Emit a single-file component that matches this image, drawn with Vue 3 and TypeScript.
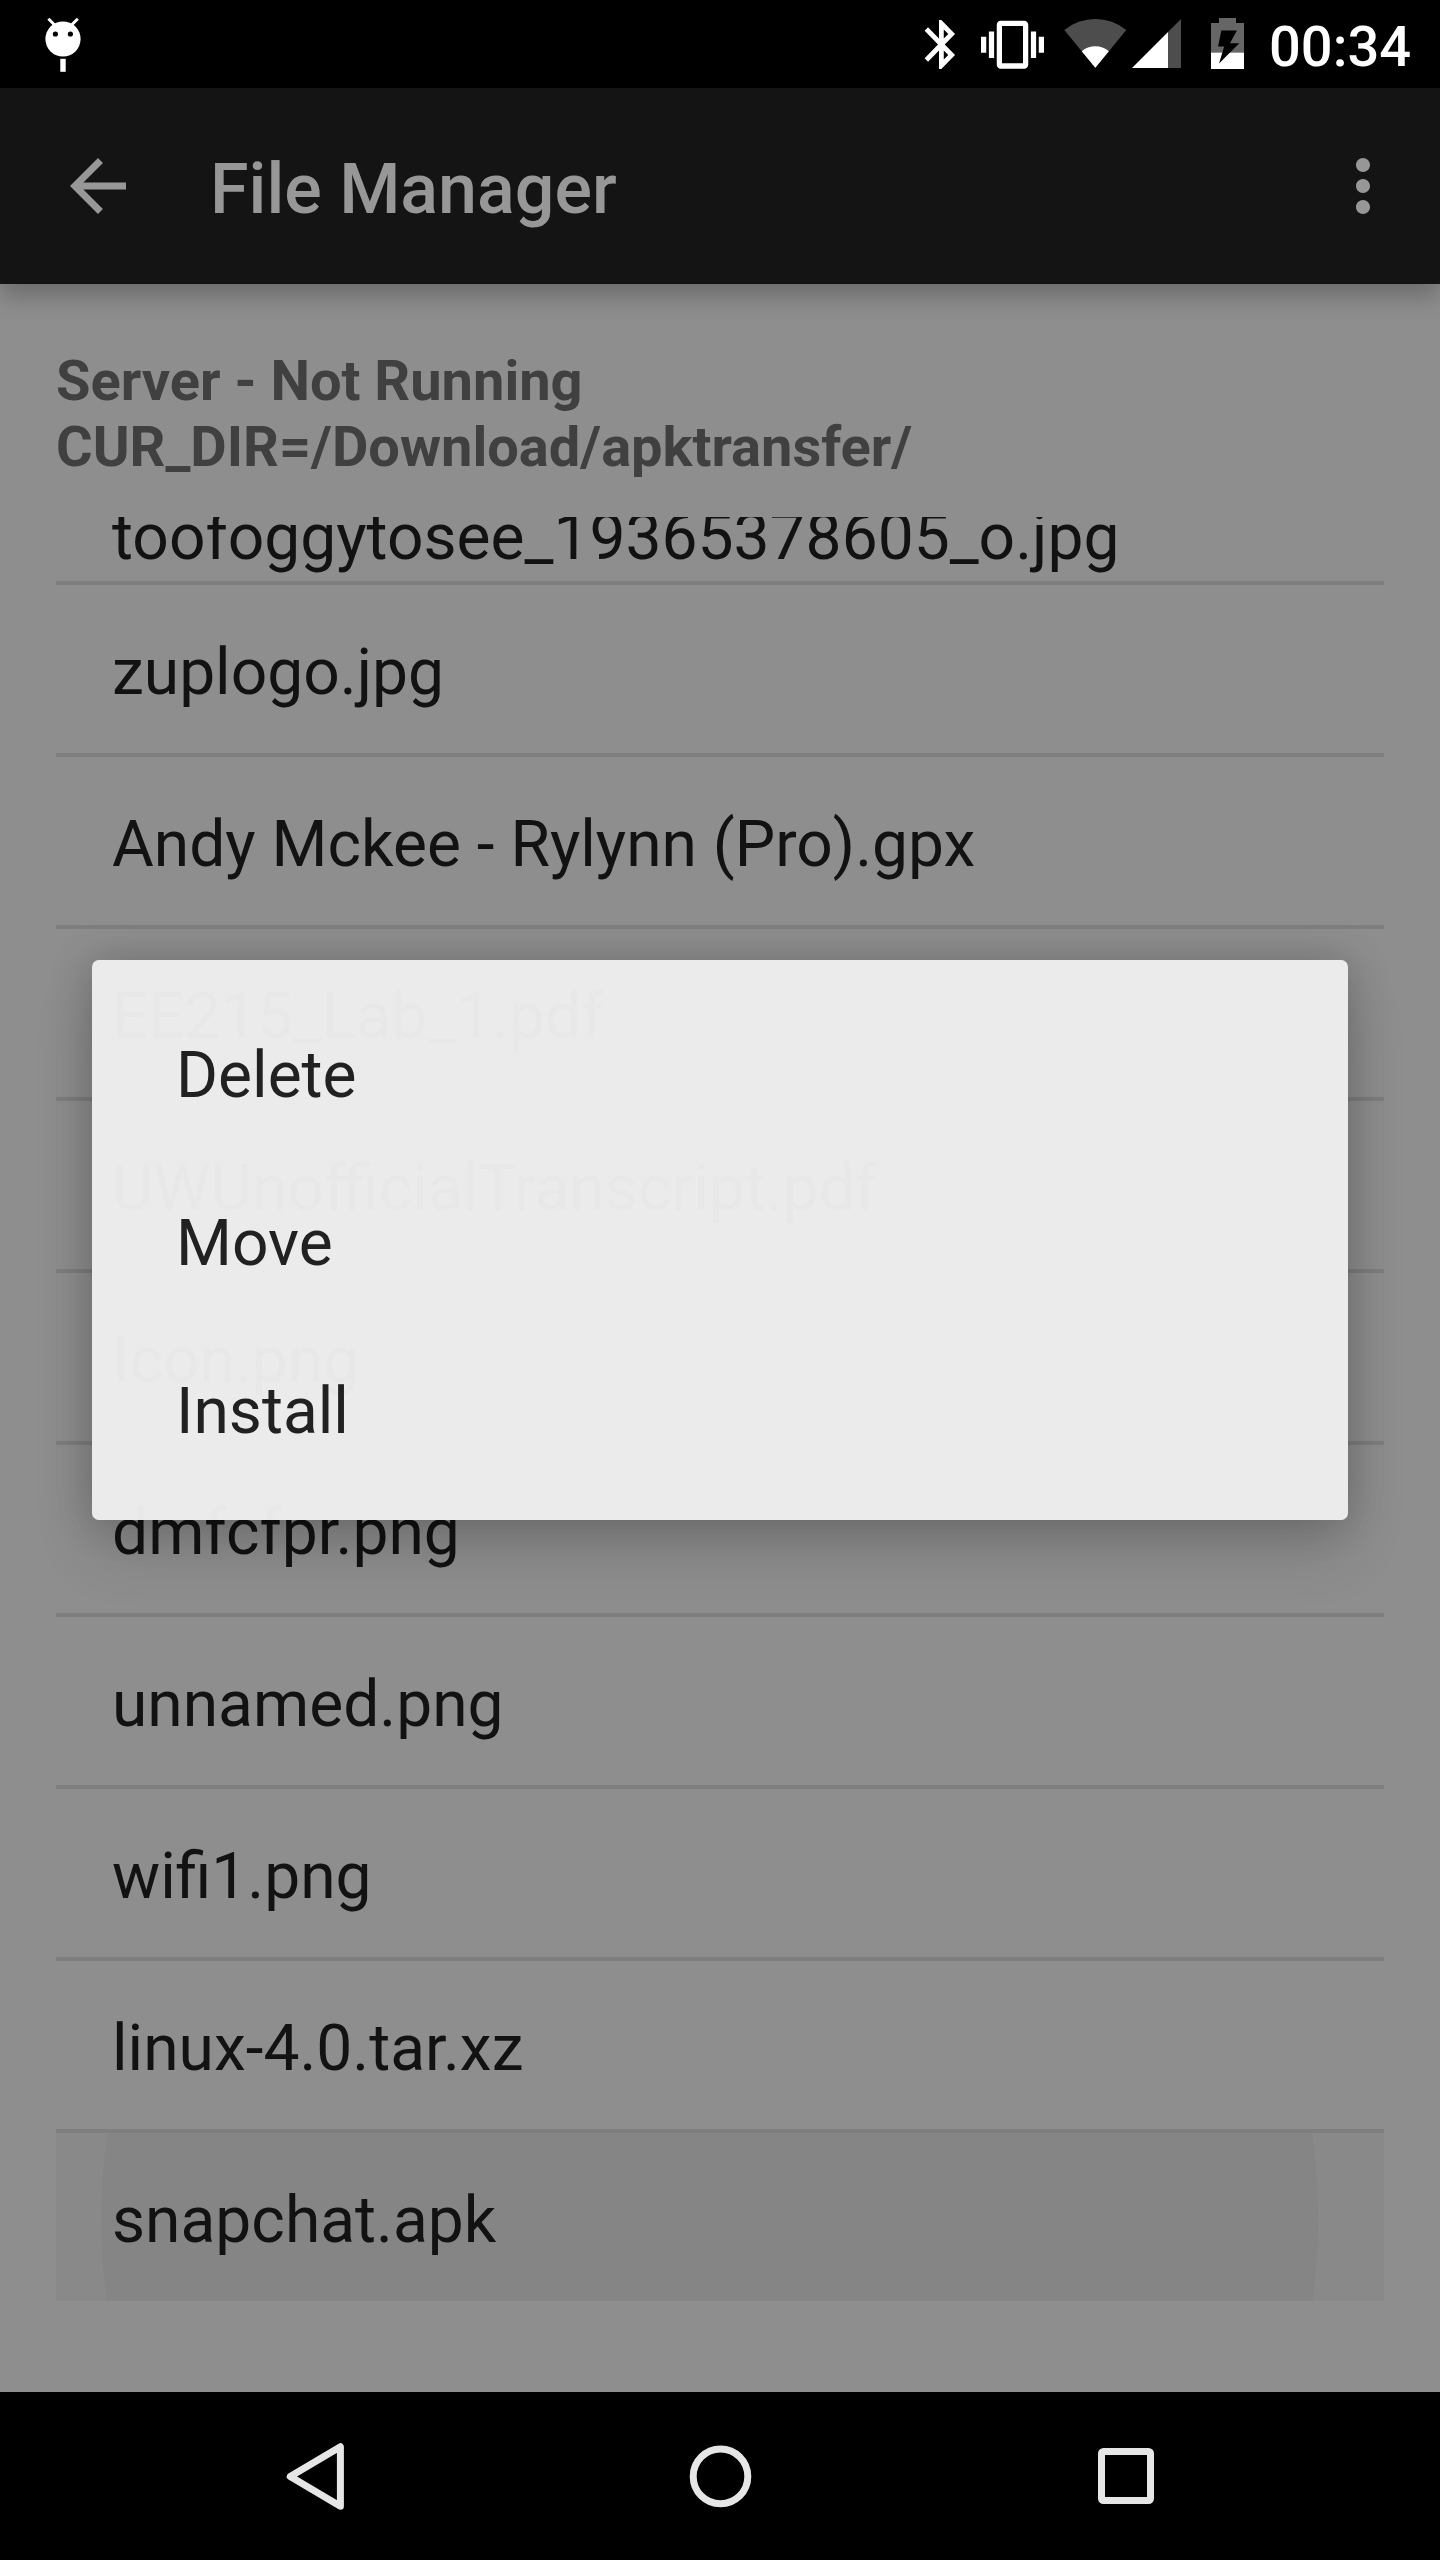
<script setup lang="ts">
interface FileRow {
  name: string
  pressed?: boolean
}

const files: FileRow[] = [
  { name: 'toofoggytosee_19365378605_o.jpg' },
  { name: 'zuplogo.jpg' },
  { name: 'Andy Mckee - Rylynn (Pro).gpx' },
  { name: 'EE215_Lab_1.pdf' },
  { name: 'UWUnofficialTranscript.pdf' },
  { name: 'Icon.png' },
  { name: 'dmfcfpr.png' },
  { name: 'unnamed.png' },
  { name: 'wifi1.png' },
  { name: 'linux-4.0.tar.xz' },
  { name: 'snapchat.apk', pressed: true },
]

const actions: string[] = ['Delete', 'Move', 'Install']
</script>

<template>
  <div class="screen">
    <header class="status-bar">
      <svg class="debug-icon" width="60" height="88" viewBox="33 0 60 88">
        <circle cx="63" cy="39" r="17.6" fill="#fff" />
        <path d="M48.4 18.8l6 6M77.8 18.8l-6 6" stroke="#fff" stroke-width="3" />
        <circle cx="55.4" cy="34" r="2.6" fill="#000" />
        <circle cx="70.4" cy="34" r="2.6" fill="#000" />
        <rect x="60.3" y="58.8" width="5.4" height="13" fill="#fff" />
      </svg>
      <div class="indicators">
        <svg width="58" height="88" viewBox="912 0 58 88">
          <path
            transform="translate(912.7 15.1) scale(2.39 2.45)"
            fill="#fff"
            d="M17.71 7.71L12 2h-1v7.59L6.41 5 5 6.41 10.59 12 5 17.59 6.41 19 11 14.41V22h1l5.71-5.71-4.3-4.29 4.3-4.29zM13 5.83l1.88 1.88L13 9.59V5.83zm1.88 10.46L13 18.17v-3.76l1.88 1.88z"
          />
        </svg>
        <svg width="84" height="88" viewBox="970 0 84 88">
          <path
            transform="translate(981 12.8) scale(2.625 2.66)"
            fill="#fff"
            d="M0 15h2V9H0v6zm3 2h2V7H3v10zm19-8v6h2V9h-2zm-3 8h2V7h-2v10zM16.5 3h-9C6.67 3 6 3.67 6 4.5v15c0 .83.67 1.5 1.5 1.5h9c.83 0 1.5-.67 1.5-1.5v-15c0-.83-.67-1.5-1.5-1.5zM16 19H8V5h8v14z"
          />
        </svg>
        <svg width="76" height="88" viewBox="1054 0 76 88">
          <path d="M1095.3 67.8L1064.3 30A48.8 48.8 0 0 1 1126.3 30Z" fill="#4d4d4d" />
          <path d="M1095.3 67.8L1081.7 51.2A21.5 21.5 0 0 1 1108.9 51.2Z" fill="#fff" />
        </svg>
        <svg width="62" height="88" viewBox="1130 0 62 88">
          <path d="M1168 32v36h13V19z" fill="#4d4d4d" />
          <path d="M1132 68l36-36v36z" fill="#fff" />
        </svg>
        <svg width="68" height="88" viewBox="1192 0 68 88">
          <path d="M1219 18h17v5h8v29.5h-33V23h8z" fill="#666" />
          <path d="M1211 52.5h33V69h-33z" fill="#fff" />
          <path d="M1221.3 30.6h15.6l-6.9 12.6h9.3L1219 63.5l5.2-17h-6.1z" fill="#000" />
        </svg>
        <span class="clock">00:34</span>
      </div>
    </header>

    <div class="toolbar">
      <svg width="84" height="84" viewBox="0 0 24 24">
        <path
          fill="#979797"
          d="M20 11H7.83l5.59-5.59L12 4l-8 8 8 8 1.41-1.41L7.83 13H20v-2z"
        />
      </svg>
      <h1 class="title">File Manager</h1>
      <svg class="overflow" width="84" height="84" viewBox="0 0 24 24">
        <path
          fill="#979797"
          d="M12 8c1.1 0 2-.9 2-2s-.9-2-2-2-2 .9-2 2 .9 2 2 2zm0 2c-1.1 0-2 .9-2 2s.9 2 2 2 2-.9 2-2-.9-2-2-2zm0 6c-1.1 0-2 .9-2 2s.9 2 2 2 2-.9 2-2-.9-2-2-2z"
        />
      </svg>
    </div>

    <main class="content">
      <div class="info">
        <div>Server - Not Running</div>
        <div>CUR_DIR=/Download/apktransfer/</div>
      </div>
      <ul class="files">
        <li v-for="file in files" :key="file.name" class="file" :class="{ pressed: file.pressed }">
          <span class="label">{{ file.name }}</span>
        </li>
      </ul>
    </main>

    <nav class="nav-bar">
      <svg width="405" height="168" viewBox="112.5 2392 405 168">
        <path d="M289.7 2476.5L339.9 2446.7V2506.3Z" />
      </svg>
      <svg width="405" height="168" viewBox="517.5 2392 405 168">
        <circle cx="720" cy="2476.4" r="27.3" />
      </svg>
      <svg width="405" height="168" viewBox="922.5 2392 405 168">
        <rect x="1101" y="2451.5" width="49" height="49" rx="2" />
      </svg>
    </nav>

    <div class="dialog">
      <div v-for="action in actions" :key="action" class="action">{{ action }}</div>
    </div>
  </div>
</template>

<style>
body {
  margin: 0;
  background: #000;
}
</style>

<style scoped>
.screen {
  position: relative;
  display: flex;
  flex-direction: column;
  width: 1440px;
  height: 2560px;
  overflow: hidden;
  background: #8e8e8e;
  font-family: Roboto, 'Liberation Sans', sans-serif;
}

svg {
  display: block;
  flex: none;
}

.status-bar {
  display: flex;
  justify-content: space-between;
  height: 88px;
  flex: none;
  padding-left: 33px;
  background: #000;
}

.indicators {
  display: flex;
}

.clock {
  box-sizing: border-box;
  width: 180px;
  padding: 3px 0 0 9px;
  color: #fff;
  font-size: 56px;
  font-weight: 500;
  line-height: 88px;
  white-space: nowrap;
}

.toolbar {
  position: relative;
  display: flex;
  align-items: center;
  flex: none;
  box-sizing: border-box;
  height: 196px;
  padding: 0 35px 0 56px;
  background: #141414;
  box-shadow: 0 13px 22px rgba(0, 0, 0, 0.23);
}

.title {
  flex: 1;
  margin: 6px 0 0 70px;
  color: #979797;
  font-size: 70px;
  font-weight: 500;
  line-height: 82px;
}

.content {
  flex: 1;
  padding: 64px 56px 0;
}

.info {
  color: #404040;
  font-size: 56px;
  font-weight: 700;
  line-height: 66px;
  white-space: nowrap;
}

.files {
  display: flex;
  flex-direction: column;
  height: 1784px;
  margin: 37px 0 0;
  padding: 0;
  overflow: hidden;
  list-style: none;
}

.file {
  flex: none;
  box-sizing: border-box;
  height: 172px;
  padding: 7px 0 0 56px;
  border-bottom: 4px solid #7e7e7e;
  color: #121212;
  font-size: 64.1px;
  line-height: 161px;
  white-space: nowrap;
}

/* The list is scrolled, so only the last line of the first row is showing. */
.file:first-child {
  height: 68px;
  padding-top: 0;
  line-height: 42px;
}

.file.pressed {
  height: 168px;
  border-bottom: 0;
  background: radial-gradient(circle at 653.7px 86px, #858585 608px, #898989 609px);
}

.nav-bar {
  display: flex;
  justify-content: center;
  flex: none;
  height: 168px;
  background: #000;
}

.nav-bar svg {
  fill: none;
  stroke: #e6e6e6;
  stroke-width: 7;
  stroke-linejoin: round;
}

.dialog {
  position: absolute;
  top: 960px;
  left: 92px;
  box-sizing: border-box;
  width: 1256px;
  height: 560px;
  padding: 28px 0;
  border-radius: 7px;
  background: rgba(238, 238, 238, 0.976);
  box-shadow:
    0 0 44px rgba(0, 0, 0, 0.2),
    0 32px 60px rgba(0, 0, 0, 0.14);
}

.action {
  box-sizing: border-box;
  height: 168px;
  padding: 7px 84px 0;
  color: #212121;
  font-size: 64.1px;
  line-height: 161px;
}
</style>
